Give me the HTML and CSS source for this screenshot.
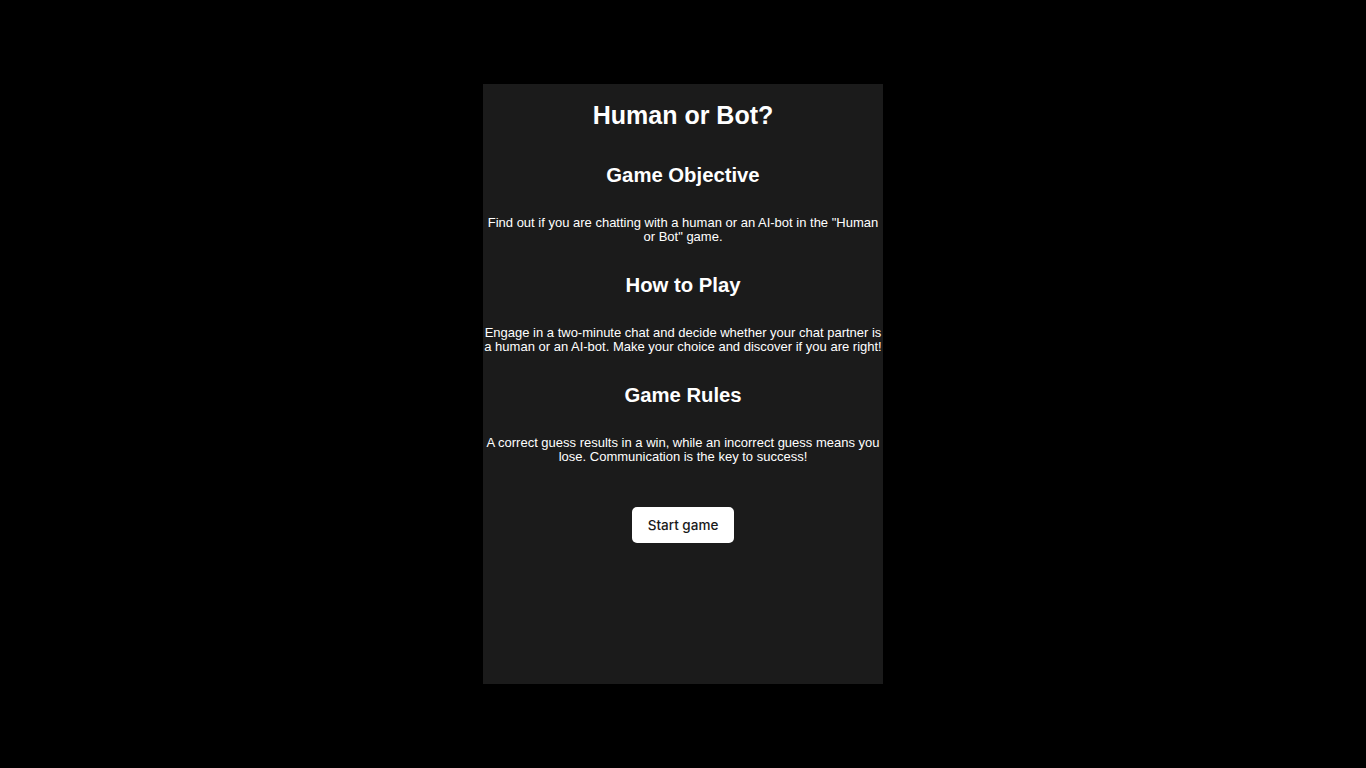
FILE: index.html
```html
<!DOCTYPE html>
<html lang="en">
<head>
<meta charset="utf-8">
<title>Human or Bot?</title>
<link rel="stylesheet" href="styles.css">
</head>
<body>
<div class="page">
  <main class="panel">
    <h1 class="title">Human or Bot?</h1>
    <section class="block">
      <h2 class="heading">Game Objective</h2>
      <p class="text">Find out if you are chatting with a human or an AI-bot in the "Human or Bot" game.</p>
    </section>
    <section class="block">
      <h2 class="heading">How to Play</h2>
      <p class="text">Engage in a two-minute chat and decide whether your chat partner is a human or an AI-bot. Make your choice and discover if you are right!</p>
    </section>
    <section class="block">
      <h2 class="heading">Game Rules</h2>
      <p class="text">A correct guess results in a win, while an incorrect guess means you lose. Communication is the key to success!</p>
    </section>
    <button class="start" type="button">Start game</button>
  </main>
</div>
</body>
</html>
```
FILE: styles.css
```css
html, body {
  margin: 0;
  padding: 0;
  background: #000;
}
body {
  font-family: "Liberation Sans", Arial, sans-serif;
  color: #fff;
}
.page {
  height: 768px;
  display: flex;
  justify-content: center;
  align-items: center;
}
.panel {
  width: 400px;
  height: 600px;
  box-sizing: border-box;
  background: #1b1b1b;
  display: flex;
  flex-direction: column;
  align-items: center;
  padding: 17px 0 0;
}
.title {
  margin: 0;
  font-size: 25px;
  line-height: 28px;
  font-weight: bold;
  text-align: center;
}
.block {
  display: flex;
  flex-direction: column;
  align-items: center;
  margin-top: 34px;
}
.block + .block {
  margin-top: 29px;
}
.heading {
  margin: 0;
  font-size: 20.3px;
  line-height: 24px;
  font-weight: bold;
  text-align: center;
}
.text {
  margin: 29px 0 0;
  font-size: 13px;
  line-height: 14px;
  text-align: center;
  color: #fff;
}
.start {
  margin-top: 43px;
  width: 102px;
  height: 36px;
  border: none;
  border-radius: 5px;
  background: #fff;
  color: #1a1a1a;
  font-family: Inter, "Liberation Sans", sans-serif;
  font-size: 13.5px;
  font-weight: 500;
  cursor: pointer;
}
```
